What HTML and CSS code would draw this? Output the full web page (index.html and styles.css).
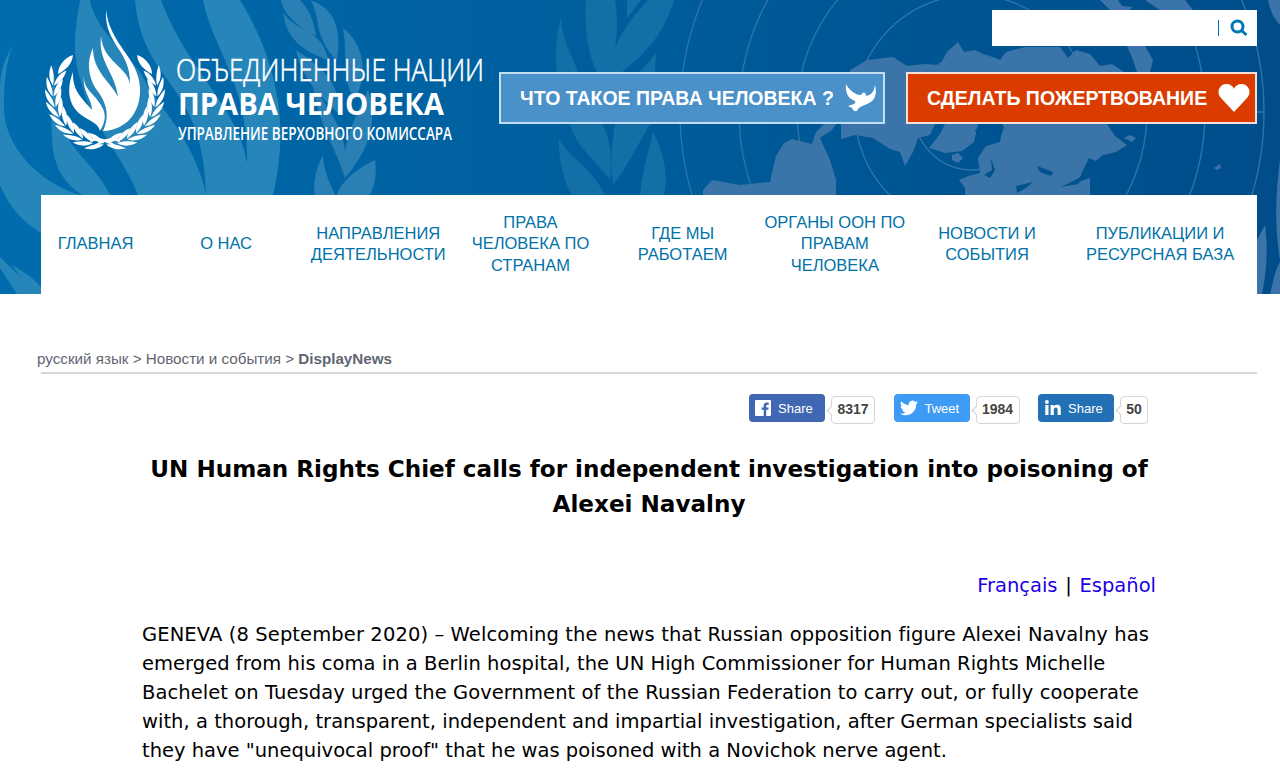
FILE: index.html
```html
<!DOCTYPE html>
<html lang="ru">

<head>
    <meta charset="UTF-8">
    <meta name="viewport" content="width=device-width, initial-scale=1.0">
    <title>OHCHR | DisplayNews</title>
    <link rel="stylesheet" href="styles.css">
</head>

<body>
    <header class="header">
        <!-- background artwork -->
        <svg class="art" width="1280" height="294" viewBox="0 0 1280 294">
            <g class="art-flame">
                <path d="M12 46C2 65 0 75 0 90V185C8 205 22 222 41 233V195H80C45 185 3 150 4 105C4 75 8 60 12 46Z" />
                <path d="M55 57C52 85 50 110 53 150C56 170 66 185 82 195H110C95 165 75 155 64 130C55 105 53 80 55 57Z" />
                <path d="M80 0C74 35 72 55 82 85C92 125 125 160 138 195H273C280 165 284 130 276 90C268 50 252 20 240 0H203C213 50 249 85 247 163C240 110 187 70 161 0H135C142 85 203 80 206 193C190 130 155 105 142 75C125 50 95 30 90 0Z" />
                <path d="M0 257L38 294H17L0 268Z" />
                <path d="M12 265C25 272 35 280 41 287V294H33Z" />
            </g>
            <g class="art-leaf">
                <path d="M281 0C283 15 300 28 316 36C314 20 308 8 300 0Z" />
                <path d="M310 0C335 8 342 30 337 60C325 50 320 35 318 25C316 12 314 5 310 0Z" />
                <path d="M283 12C286 40 305 52 328 60C325 40 310 32 300 27C292 22 286 18 283 12Z" />
                <path d="M343 28C365 45 368 75 355 100C341 80 348 55 343 28Z" />
                <path d="M296 50C302 80 320 95 340 115C338 80 325 70 296 50Z" />
                <path d="M313 85C318 125 335 145 345 178C350 135 335 120 313 85Z" />
                <path d="M368 90C380 125 365 155 345 178C342 140 352 125 368 90Z" />
                <path d="M323 155C315 170 313 185 315 195H335C328 180 324 170 323 155Z" />
                <path d="M375 160C350 172 340 185 337 195H370C375 185 377 172 375 160Z" />
            </g>
            <g class="art-leaf art-leaf-dim">
                <path d="M586 0C583 30 590 60 597 72H610C614 60 620 30 615 0Z" />
                <path d="M627 0H641L627 18Z" />
                <path d="M674 0H648C625 25 612 45 610 72H622C650 50 665 30 674 0Z" />
                <path d="M561 17C553 50 557 65 557 72H578C570 50 562 40 561 17Z" />
                <path d="M656 53L640 72H655Z" />
                <path d="M559 138C558 160 565 185 572 195H605C590 165 570 160 559 138Z" />
                <path d="M570 124H602C612 140 612 165 610 180C595 160 575 145 570 124Z" />
                <path d="M615 124H650C635 150 625 170 613 185C610 160 612 140 615 124Z" />
                <path d="M653 132C668 160 667 185 664 195H640C642 170 648 155 653 132Z" />
            </g>
            <g class="art-globe">
                <circle cx="972" cy="112" r="58" />
                <circle cx="972" cy="112" r="117" />
                <circle cx="972" cy="112" r="175" />
                <circle cx="972" cy="112" r="233" />
                <circle cx="972" cy="112" r="292" />
                <path d="M1205 112H1264" />
            </g>
            <g class="art-land">
                <path d="M850 70L867 60L893 57L907 66L925 64L940 65L947 52L958 42L964 52L975 50L987 56L1000 60L1006 52L1025 47L1060 47L1068 58L1076 50L1090 54L1100 66L1112 64L1124 72V124H1107L1115 136L1127 145L1116 152L1103 155L1096 161L1089 158L1083 170L1078 182L1090 178V195H965V188L959 180L968 176L980 173L978 158L986 146L1000 142L1003 124H978L974 142L962 151L945 153L929 148L940 134L945 124H935L930 135L918 138L913 152L905 166L900 152L890 149L873 138L855 135L841 139V124H850Z" />
                <path d="M703 190L712 180L740 185L770 182L776 156L784 143L792 139L812 144L816 132L824 124H836L832 130L820 138L830 160L836 180V195H703Z" />
                <path d="M1100 0H1118L1122 6L1132 7L1130 10H1110Z" />
                <path d="M1145 0H1185L1193 10H1160Z" />
                <path d="M1127 46H1145L1153 60L1150 72H1137L1133 60Z" />
                <path d="M1268 0H1280V25Q1271 16 1268 0Z" />
                <path d="M1280 160C1276 190 1274 225 1280 260Z" />
                <path d="M1257 240L1265 225C1269 255 1265 278 1262 294H1257Z" />
                <path d="M1280 262C1274 272 1273 284 1270 294H1280Z" />
                <path d="M952 155L958 153L963 158L958 163L952 160Z" />
                <path d="M1124 138L1130 135L1136 138L1132 142Z" />
                <path d="M1214 168L1220 164L1221 168L1217 170Z" />
            </g>
            <g class="art-sea">
                <path d="M975 130L980 127L979 137Z" />
                <path d="M992 128L1004 126L1002 134L996 132Z" />
                <path d="M991 158L995 170L990 178L984 175L992 170Z" />
                <path d="M1037 166L1053 172L1051 176L1040 172Z" />
                <path d="M1016 186L1033 182L1026 188L1017 193Z" />
                <path d="M1061 187L1085 175L1078 184Z" />
            </g>
        </svg>

        <div class="banner">
            <svg class="logo" width="450" height="155" viewBox="40 0 450 155">
                <defs>
                    <g id="pair">
                        <path d="M53 100C47 95 45 88 46 81C50 87 53 93 53 100Z" />
                        <path d="M54 100C54 91 57 86 62 82C62 90 59 96 54 100Z" />
                    </g>
                    <g id="branch">
                        <use href="#pair" transform="rotate(-80 105 92)" />
                        <use href="#pair" transform="rotate(-68 105 92)" />
                        <use href="#pair" transform="rotate(-56 105 92)" />
                        <use href="#pair" transform="rotate(-44 105 92)" />
                        <use href="#pair" transform="rotate(-32 105 92)" />
                        <use href="#pair" transform="rotate(-20 105 92)" />
                        <use href="#pair" transform="rotate(-8 105 92)" />
                        <use href="#pair" transform="rotate(4 105 92)" />
                        <use href="#pair" transform="rotate(16 105 92)" />
                        <path d="M58 74C58 66 64 58 73 55C72 64 66 70 58 74Z" />
                        <path d="M90 139C100 136 108 139 120 148L117 149C108 142 100 139 90 142Z" />
                    </g>
                </defs>
                <path d="M93 48C85 65 90 82 99 93C108 106 109 119 103 131C126 130 141 113 140 88C139 58 110 45 106 10C104 45 131 50 130 84C127 66 103 62 101 36C98 62 115 72 118 97C111 82 93 72 93 48Z" />
                <path d="M73 72C66 90 69 105 80 114C88 121 98 122 100 131C108 118 105 110 98 101C92 92 83 88 84 75C82 92 92 98 92 110C84 100 72 92 73 72Z" />
                <use href="#branch" />
                <use href="#branch" transform="matrix(-1 0 0 1 210 0)" />
                <text class="logo-thin" x="176" y="81" textLength="308" lengthAdjust="spacingAndGlyphs">ОБЪЕДИНЕННЫЕ НАЦИИ</text>
                <text class="logo-bold" x="178" y="115" textLength="266" lengthAdjust="spacingAndGlyphs">ПРАВА ЧЕЛОВЕКА</text>
                <text class="logo-small" x="178" y="140" textLength="274" lengthAdjust="spacingAndGlyphs">УПРАВЛЕНИЕ ВЕРХОВНОГО КОМИССАРА</text>
            </svg>

            <div class="tools">
                <div class="search">
                    <span class="search-line"></span>
                    <svg width="18" height="18" viewBox="0 0 18 18">
                        <circle cx="7.500" cy="7.500" r="5.500" />
                        <path d="M11.500 11.500L16.500 16" />
                    </svg>
                </div>
                <div class="buttons">
                    <a class="button">
                        <span>ЧТО ТАКОЕ ПРАВА ЧЕЛОВЕКА ?</span>
                        <svg width="32" height="30" viewBox="0 0 32 30">
                            <path d="M1 1C0 9 3 15 8 17C11 18 11 20 9 21L3 23L7 25L9 28L12 28C14 23 19 23 24 20C31 17 32 9 30 2C29 9 26 12 21 13C21 9 18 8 16 12C10 12 4 7 1 1Z" />
                        </svg>
                    </a>
                    <a class="button donate">
                        <span>СДЕЛАТЬ ПОЖЕРТВОВАНИЕ</span>
                        <svg width="32" height="30" viewBox="0 0 32 30">
                            <path d="M16 29L3 15C-3 8 3 1 8 1C12 1 15 3 16 6C17 3 20 1 24 1C29 1 35 8 29 15Z" />
                        </svg>
                    </a>
                </div>
            </div>
        </div>

        <nav class="nav">
            <a>ГЛАВНАЯ</a>
            <a>О НАС</a>
            <a>НАПРАВЛЕНИЯ<br>ДЕЯТЕЛЬНОСТИ</a>
            <a>ПРАВА<br>ЧЕЛОВЕКА ПО<br>СТРАНАМ</a>
            <a>ГДЕ МЫ<br>РАБОТАЕМ</a>
            <a>ОРГАНЫ ООН ПО<br>ПРАВАМ<br>ЧЕЛОВЕКА</a>
            <a>НОВОСТИ И<br>СОБЫТИЯ</a>
            <a>ПУБЛИКАЦИИ И<br>РЕСУРСНАЯ БАЗА</a>
        </nav>
    </header>

    <main class="main">
        <div class="breadcrumb">русский язык &gt; Новости и события &gt; <b>DisplayNews</b></div>

        <div class="share">
            <div class="share-item">
                <a class="share-btn facebook">
                    <svg width="16" height="16" viewBox="0 0 16 16">
                        <path d="M1 0H15Q16 0 16 1V15Q16 16 15 16H11.200V9.800H13.300L13.600 7.400H11.200V5.900Q11.200 4.700 12.400 4.700H13.700V2.500L11.900 2.400Q8.700 2.400 8.700 5.600V7.400H6.600V9.800H8.700V16H1Q0 16 0 15V1Q0 0 1 0Z" />
                    </svg>
                    Share
                </a>
                <span class="count">8317</span>
            </div>
            <div class="share-item">
                <a class="share-btn twitter">
                    <svg width="18" height="16" viewBox="0 2 24 20">
                        <path d="M23.950 4.570a10 10 0 0 1-2.820.770 4.960 4.960 0 0 0 2.160-2.720c-.950.550-2 .950-3.130 1.180a4.920 4.920 0 0 0-8.380 4.480C7.690 8.090 4.070 6.130 1.640 3.160a4.920 4.920 0 0 0 1.520 6.570 4.900 4.900 0 0 1-2.230-.610v.060a4.920 4.920 0 0 0 3.950 4.830 5 5 0 0 1-2.210.080 4.940 4.940 0 0 0 4.600 3.420A9.870 9.870 0 0 1 0 19.540a13.990 13.990 0 0 0 7.550 2.210c9.050 0 14-7.500 14-13.980 0-.210 0-.420-.020-.630a9.940 9.940 0 0 0 2.460-2.550z" />
                    </svg>
                    Tweet
                </a>
                <span class="count">1984</span>
            </div>
            <div class="share-item">
                <a class="share-btn linkedin">
                    <svg width="16" height="16" viewBox="0 0 16 16">
                        <path d="M.300 5H3.500V15H.300ZM5.600 5H8.700V6.400C9.300 5.400 10.400 4.800 11.900 4.800C15 4.800 15.800 6.800 15.800 9.500V15H12.600V10C12.600 8.500 12.300 7.500 10.900 7.500C9.400 7.500 8.800 8.500 8.800 10V15H5.600Z" />
                        <circle cx="1.900" cy="2" r="1.900" />
                    </svg>
                    Share
                </a>
                <span class="count count-small">50</span>
            </div>
        </div>

        <article class="article">
            <h1>UN Human Rights Chief calls for independent investigation into poisoning of<br>Alexei Navalny</h1>
            <div class="langs"><a>Français</a> | <a>Español</a></div>
            <p>
                <span class="loose">GENEVA (8 September 2020) – Welcoming the news that Russian opposition figure Alexei Navalny has</span><br>
                emerged from his coma in a Berlin hospital, the UN High Commissioner for Human Rights Michelle<br>
                <span class="semi-loose">Bachelet on Tuesday urged the Government of the Russian Federation to carry out, or fully cooperate</span><br>
                with, a thorough, transparent, independent and impartial investigation, after German specialists said<br>
                <span class="tight">they have "unequivocal proof" that he was poisoned with a Novichok nerve agent.</span>
            </p>
        </article>
    </main>
</body>

</html>
```
FILE: styles.css
```css
* {
    box-sizing: border-box;
}

body {
    margin: 0;
    height: 774px;
    overflow: hidden;
    background-color: #fff;
    font-family: "Liberation Sans", Arial, sans-serif;
}

.header {
    position: relative;
    height: 294px;
    padding: 0 23px 0 41px;
    background: linear-gradient(90deg, #006cae 0%, #00609f 40%, #005795 65%, #004d8a 100%);
}

.art {
    position: absolute;
    top: 0;
    left: 0;
}

.art-flame {
    fill: #2686b9;
}

.art-leaf {
    fill: #2a7fb4;
}

.art-leaf-dim {
    fill: #146fa7;
}

.art-globe {
    fill: none;
    stroke: #2e76ab;
    stroke-width: 1.3;
}

.art-land {
    fill: #3b74a8;
}

.art-sea {
    fill: #00528f;
}

.banner {
    position: relative;
    display: flex;
    justify-content: space-between;
    height: 195px;
}

.logo {
    margin-left: -1px;
    flex: none;
    fill: #fff;
    overflow: visible;
}

.logo-thin,
.logo-bold,
.logo-small {
    font-family: "Open Sans", "Noto Sans", sans-serif;
}

.logo-thin {
    font-size: 31px;
    font-weight: 300;
    stroke: #fff;
    stroke-width: 0.6;
}

.logo-bold {
    font-size: 31px;
    font-weight: 700;
}

.logo-small {
    font-size: 17.5px;
    font-weight: 600;
}

.tools {
    display: flex;
    flex-direction: column;
    align-items: flex-end;
    gap: 26px;
    padding-top: 10px;
}

.search {
    display: flex;
    align-items: center;
    justify-content: flex-end;
    gap: 11px;
    width: 265px;
    height: 36px;
    padding-right: 9px;
    background-color: #fff;
}

.search-line {
    width: 1px;
    height: 16px;
    background-color: #0071ab;
}

.search svg {
    fill: none;
    stroke: #0078b3;
    stroke-width: 3;
}

.buttons {
    display: flex;
    gap: 21px;
    margin-left: -40px;
}

.button {
    display: flex;
    align-items: center;
    justify-content: space-between;
    width: 386px;
    height: 52px;
    padding: 0 6px 0 19px;
    border: 2px solid #c4def1;
    background-color: #4a90c9;
    color: #fff;
    font-size: 19.5px;
    font-weight: bold;
    white-space: nowrap;
}

.button svg {
    fill: #fff;
}

.donate {
    width: 351px;
    padding: 0 5px 0 19px;
    border-color: #f5dfd6;
    background-color: #da3c00;
}

.nav {
    position: relative;
    display: grid;
    grid-template-columns: 109px repeat(6, 152.2px) 1fr;
    align-items: center;
    height: 99px;
    padding-bottom: 1px;
    background-color: #fff;
    color: #0072a8;
    font-size: 16.5px;
    line-height: 21.5px;
    text-align: center;
    white-space: nowrap;
}

.main {
    padding: 55px 23px 0 41px;
}

.breadcrumb {
    height: 25px;
    text-indent: -4px;
    border-bottom: 2px solid #d6d6d8;
    color: #5f6672;
    font-size: 15.2px;
    line-height: 19px;
}

.share {
    display: flex;
    justify-content: flex-end;
    gap: 18.5px;
    padding: 20px 109px 0 0;
}

.share-item {
    display: flex;
    gap: 6px;
}

.share-btn {
    display: flex;
    align-items: center;
    gap: 7px;
    width: 76px;
    height: 28px;
    padding-left: 6px;
    border-radius: 4px;
    color: #fff;
    font-size: 13px;
}

.share-btn svg {
    fill: #fff;
}

.facebook {
    background-color: #4267b2;
}

.twitter {
    background-color: #3d9bf3;
}

.linkedin {
    background-color: #2371b5;
}

.linkedin svg {
    margin-left: 1px;
}

.count {
    position: relative;
    width: 44px;
    height: 28px;
    margin-top: 2px;
    border: 1px solid #d5d5d5;
    border-radius: 4px;
    color: #444;
    font-size: 14px;
    font-weight: bold;
    line-height: 24px;
    text-align: center;
}

.count-small {
    width: 28px;
}

.count:before {
    content: '';
    position: absolute;
    left: -4px;
    top: 10px;
    width: 6px;
    height: 6px;
    border-left: 1px solid #d0d0d0;
    border-bottom: 1px solid #d0d0d0;
    background-color: #fff;
    transform: rotate(45deg);
}

.article {
    padding: 28px 101px 0;
    color: #000;
    font-family: "DejaVu Sans", Verdana, sans-serif;
    font-variant-ligatures: none;
}

.article h1 {
    margin: 0;
    font-size: 23.1px;
    line-height: 35px;
    text-align: center;
    white-space: nowrap;
}

.langs {
    margin-top: 49px;
    font-size: 19.5px;
    line-height: 29px;
    text-align: right;
    word-spacing: 1.5px;
}

.langs a {
    color: #1d00e6;
}

.article p {
    margin: 20px 0 0;
    font-size: 19.5px;
    line-height: 29px;
    letter-spacing: 0.03px;
    white-space: nowrap;
}

.loose {
    letter-spacing: 0.11px;
}

.semi-loose {
    letter-spacing: 0.07px;
}

.tight {
    letter-spacing: 0;
}
```
